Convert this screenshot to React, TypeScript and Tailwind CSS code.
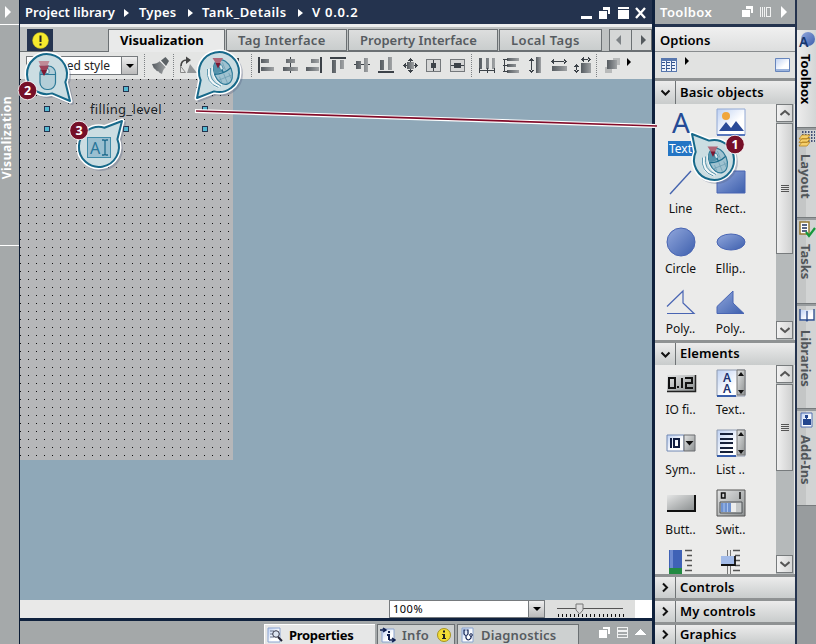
import React from "react";

type Kids = { children?: React.ReactNode };

const NAVY = "#24334e";

/* ---------- toolbar glyphs: 24x24 box each ---------- */
function Glyph({ children }: Kids) {
  return (
    <svg className="h-6 w-6 shrink-0" viewBox="0 0 24 24" shapeRendering="crispEdges">
      {children}
    </svg>
  );
}
const G = "url(#steel)";
const D = "#3c4248";

const alignGlyphs = [
  <Glyph key="l"><path fill={D} d="M4 3h2v16H4z" /><path fill={G} d="M7 5h8v4H7zM7 13h13v4H7z" /></Glyph>,
  <Glyph key="c"><path fill={D} d="M12 3h1v16h-1z" /><path fill={G} d="M8 5h9v4H8zM5 13h15v4H5z" /></Glyph>,
  <Glyph key="r"><path fill={D} d="M18 3h2v16h-2z" /><path fill={G} d="M9 5h8v4H9zM4 13h13v4H4z" /></Glyph>,
  <Glyph key="t"><path fill={D} d="M4 3h16v2H4z" /><path fill={G} d="M6 6h4v13H6zM14 6h4v9h-4z" /></Glyph>,
  <Glyph key="m"><path fill={D} d="M4 10h16v1H4z" /><path fill={G} d="M6 7h5v8H6zM14 4h4v14h-4z" /></Glyph>,
  <Glyph key="b"><path fill={D} d="M4 17h16v2H4z" /><path fill={G} d="M6 6h4v10H6zM14 3h4v13h-4z" /></Glyph>,
  <Glyph key="x"><path fill={G} d="M9 8h7v7H9z" /><path fill={D} d="M12 5h1v3h-1zM12 15h1v3h-1zM6 11h3v1H6zM16 11h3v1h-3z" /><path fill={D} d="M12.500 4l2.500 3h-5zM12.500 19l2.500-3h-5zM5 11.500l3-2.500v5zM20 11.500l-3-2.500v5z" /></Glyph>,
  <Glyph key="v"><path fill="#d5d6d6" stroke="#74787b" d="M4.500 5.500h14v12h-14z" /><path fill={D} d="M11 6h1v11h-1z" /><path fill={D} d="M9 9h5v5H9z" /></Glyph>,
  <Glyph key="h"><path fill="#d5d6d6" stroke="#74787b" d="M4.500 5.500h14v12h-14z" /><path fill={D} d="M5 11h13v1H5zM8 9h7v5H8z" /></Glyph>,
];
const spaceGlyphs = [
  <Glyph key="sh"><path fill={G} d="M4 4h3v11H4zM11 4h3v11h-3zM17 4h3v11h-3z" /><path fill={D} d="M4 14h1v5H4zM12 14h1v5h-1zM19 14h1v5h-1zM5 16h15v1H5z" /></Glyph>,
  <Glyph key="sv"><path fill={G} d="M8 4h12v3H8zM8 10h9v3H8zM8 16h12v3H8z" /><path fill={D} d="M4 5h5v1H4zM4 11h5v1H4zM4 17h5v1H4zM5 5h1v13H5z" /></Glyph>,
  <Glyph key="eh"><path fill={G} d="M13 3h5v16h-5z" /><path fill={D} d="M8 6h1v11H8zM8.500 4l3 3h-6zM8.500 19l3-3h-6z" /></Glyph>,
  <Glyph key="ew"><path fill={G} d="M5 12h15v5H5z" /><path fill={D} d="M7 7h11v1H7zM4 7.500l3-2.500v5zM20 7.500l-3-2.500v5z" /></Glyph>,
  <Glyph key="eb"><path fill={G} d="M10 9h10v10H10z" /><path fill={D} d="M12 5h6v1h-6zM10 5.500l3-2.500v5zM20 5.500l-3-2.500v5zM5 12h1v5H5zM5.500 10l2.500 3h-5zM5.500 19l2.500-3h-5z" /></Glyph>,
];

function Sep() {
  return <span className="h-[23px] w-px shrink-0 border-l border-dotted border-[#7d8184]" />;
}
function Tri({ className, color }: { className?: string; color?: string }) {
  return (
    <svg className={"shrink-0 " + (className ?? "")} viewBox="0 0 6 10" preserveAspectRatio="none">
      <path d="M0 0L6 5L0 10z" fill={color ?? "#fff"} />
    </svg>
  );
}

function Tab({ children, className }: Kids & { className: string }) {
  return (
    <div className={"flex h-[22px] shrink-0 items-center whitespace-nowrap border border-[#6b7073] text-[13px] leading-none " + className}>
      {children}
    </div>
  );
}

/* ---------- toolbox ---------- */
function SectionHead({ label, open, className }: { label: string; open?: boolean; className: string }) {
  return (
    <div className={"flex shrink-0 overflow-hidden border-t-[3px] border-[#8f9293] bg-linear-to-b from-[#ececec] to-[#c9cccc] " + className}>
      <div className="flex w-[21px] items-center justify-center border-r border-[#6f7375]">
        <svg className="h-[11px] w-[11px]" viewBox="0 0 11 11" fill="none" stroke="#111" strokeWidth="2">
          {open ? <path d="M1.500 3.500L5.500 7.500L9.500 3.500" /> : <path d="M3 1.500L7 5.500L3 9.500" />}
        </svg>
      </div>
      <div className="flex items-center pb-0.5 pl-1 text-[13px] font-semibold leading-[18px] tracking-[0.15px]">{label}</div>
    </div>
  );
}

function Item({ label, selected, children }: Kids & { label?: string; selected?: boolean }) {
  return (
    <div className="flex h-[60px] w-[50px] shrink-0 flex-col items-center">
      <div className="flex h-[34px] items-center justify-center">
        <svg className="h-8 w-8 overflow-visible" viewBox="0 0 32 32">{children}</svg>
      </div>
      {label && (
        <div className={"mr-px mt-0.5 flex h-[15px] items-center justify-center whitespace-nowrap px-px text-[12px] leading-[15px] " + (selected ? "bg-[#2475c4] text-white" : "text-[#111]")}>
          {label}
        </div>
      )}
    </div>
  );
}

function ScrollButton({ up }: { up?: boolean }) {
  return (
    <div className="flex h-[18px] w-[17px] shrink-0 items-center justify-center border border-[#777b7d] bg-linear-to-r from-[#f2f2f2] to-[#d6d7d7]">
      <svg className="h-2.5 w-2.5" viewBox="0 0 10 10" fill="none" stroke="#555" strokeWidth="2">
        {up ? <path d="M0.500 7L5 3L9.500 7" /> : <path d="M0.500 3L5 7L9.500 3" />}
      </svg>
    </div>
  );
}
function ScrollBar({ thumb }: { thumb: string }) {
  return (
    <div className="ml-auto mr-px flex w-[18px] shrink-0 flex-col bg-[#b5b9ba] pb-px">
      <ScrollButton up />
      <div className={"mt-px flex w-[17px] shrink-0 flex-col items-center justify-center gap-px border border-[#777b7d] bg-linear-to-r from-[#f0f0f0] to-[#cfd0d0] " + thumb}>
        <i className="h-px w-2 bg-[#555]" /><i className="h-px w-2 bg-[#555]" /><i className="h-px w-2 bg-[#555]" /><i className="h-px w-2 bg-[#555]" />
      </div>
      <div className="mt-auto"><ScrollButton /></div>
    </div>
  );
}

function SideTab({ label, className, active, children }: Kids & { label: string; className: string; active?: boolean }) {
  return (
    <div className={"flex w-[19px] shrink-0 flex-col items-center border-b border-[#777b7d] " + (active ? "bg-linear-to-r from-[#ededed] to-[#d4d6d6] text-black " : "bg-linear-to-r from-[#c4c6c6] from-50% to-[#d2d4d4] to-50% text-[#51565a] ") + className}>
      <svg className="h-[18px] w-[18px] shrink-0" viewBox="0 0 18 18">{children}</svg>
      <span className="mr-px mt-1.5 whitespace-nowrap text-[13px] font-bold leading-[18px] [writing-mode:vertical-rl]">{label}</span>
    </div>
  );
}

/* ---------- call-outs ---------- */
function Balloon({ cx, cy, tx, ty }: { cx: number; cy: number; tx: number; ty: number }) {
  const r = 20;
  const a = Math.atan2(ty - cy, tx - cx);
  const p = (t: number) => `${(cx + r * Math.cos(t)).toFixed(1)} ${(cy + r * Math.sin(t)).toFixed(1)}`;
  const d = `M${p(a + 0.45)}A${r} ${r} 0 1 1 ${p(a - 0.45)}L${tx} ${ty}Z`;
  return (
    <g strokeLinejoin="round">
      <path d={d} transform="translate(2 2)" fill="none" stroke="#55608055" strokeWidth="4" />
      <path d={d} fill="#cfdde2" stroke="#fff" strokeWidth="5" />
      <path d={d} fill="#cbdde2" stroke="#17698a" strokeWidth="2" />
    </g>
  );
}
function Badge({ x, y, n }: { x: number; y: number; n: number }) {
  return (
    <g>
      <circle cx={x} cy={y} r="9.300" fill="#760f28" stroke="#fff" strokeWidth="0.800" />
      <text x={x} y={y + 4.500} textAnchor="middle" fill="#fff" fontSize="12.500" fontWeight="700">{n}</text>
    </g>
  );
}
/* upright mouse with a press marker */
function MouseUpright({ x, y }: { x: number; y: number }) {
  return (
    <g transform={`translate(${x} ${y})`}>
      <rect x="-7.500" y="-8" width="15.500" height="23.500" rx="7" fill="#b3ced8" stroke="#2c7997" strokeWidth="1.200" />
      <path d="M-7 0V-2q0-5.500 7-5.500V0z" fill="#5f9ab1" />
      <path d="M-7.500 0.500h15.500M0-8v8" fill="none" stroke="#2c7997" strokeWidth="1.200" />
      <rect x="-1.500" y="-5" width="3" height="4.500" rx="1" fill="#dcebf0" stroke="#2c7997" strokeWidth="0.700" />
      <path d="M-9-13H2L0-8.500H-7z" fill="#c08a97" />
      <path d="M-8.500-8.500H1.500L-3.500 1.500z" fill="#9c4159" />
      <path d="M-6.500-4H-0.500L-3.500 2z" fill="#7d1731" />
    </g>
  );
}
/* tilted mouse with motion echoes for a drag */
function MouseDrag({ x, y }: { x: number; y: number }) {
  return (
    <g transform={`translate(${x} ${y})`}>
      <g fill="none" stroke="#5c97ae" strokeWidth="1">
        <path d="M-12.500-3q-2 14 11 18" stroke="#f4f8f9" strokeWidth="3" />
        <path d="M-13.500-3q-2 14 11 18.500" />
        <path d="M-10.500-4q-2 13 10.500 18" />
        <path d="M-8-5q-1 12 9 18" stroke="#f4f8f9" strokeWidth="1.500" />
      </g>
      <g transform="translate(2 0) rotate(-22)">
        <ellipse rx="8.800" ry="12.800" fill="#9fc2d0" stroke="#2c7997" strokeWidth="1.200" />
        <path d="M-8.800-1Q-7-12.500 0-12.500V-0.500z" fill="#5593ac" />
        <path d="M-8.800-1Q0 2.500 8.800-1M0-12.800V0.500" fill="none" stroke="#1d6d8d" strokeWidth="1.200" />
        <path d="M-5 3v6M0 2v10M5 3v6M-7 6h14M3-9v8" stroke="#6d9fb3" strokeWidth="0.700" />
        <rect x="-1.400" y="-7.500" width="2.800" height="5" rx="1" fill="#dcebf0" stroke="#1d6d8d" strokeWidth="0.600" />
      </g>
      <path d="M-8.500-14H2L-3-5.500z" fill="#b06577" />
      <path d="M-5.500-9H-0.500L-3-3.500z" fill="#7d1731" />
    </g>
  );
}

const handles = [[126, 89], [47, 109], [205, 109], [47, 129], [126, 129], [205, 129]];

export default function App() {
  return (
    <div className="relative flex h-[644px] w-[816px] overflow-hidden bg-[#a4a8a9] font-['Noto_Sans',sans-serif] text-black">
      <svg className="absolute h-0 w-0">
        <defs>
          <linearGradient id="steel" x1="0" x2="1"><stop stopColor="#555b60" /><stop offset="1" stopColor="#a0a3a5" /></linearGradient>
          <linearGradient id="blue" x1="0" y1="0" x2="1" y2="1"><stop stopColor="#91a7dc" /><stop offset="1" stopColor="#3d5fad" /></linearGradient>
          <linearGradient id="pale" x1="0" y1="0" x2="1" y2="1"><stop stopColor="#bdd0f2" /><stop offset="0.600" stopColor="#fff" /></linearGradient>
          <linearGradient id="grey" x1="0" y1="0" x2="1" y2="1"><stop stopColor="#e4e5e5" /><stop offset="1" stopColor="#8d9192" /></linearGradient>
        </defs>
      </svg>

      {/* left rail */}
      <div className="flex w-5 shrink-0 flex-col border-r border-[#0c1c35] bg-[#a5a9aa]">
        <div className="flex h-[25px] items-center border-b border-white pl-[5px]"><Tri className="h-3 w-1.5" /></div>
        <div className="flex h-[221px] items-center border-b border-white">
          <span className="mt-[5px] rotate-180 whitespace-nowrap text-[12px] font-bold leading-[14px] tracking-[0.5px] text-white [writing-mode:vertical-rl]">Visualization</span>
        </div>
      </div>

      {/* editor */}
      <div className="flex w-[632px] shrink-0 flex-col">
        <div className="flex h-6 shrink-0 items-center whitespace-nowrap bg-[#24334e] pl-[5px] pt-px text-[13px] font-semibold text-white">
          <span className="w-[99px] tracking-[0.05px]">Project library</span><Tri className="h-2 w-[5px]" />
          <span className="ml-[10px] w-[49px] tracking-[0.2px]">Types</span><Tri className="h-2 w-[5px]" />
          <span className="ml-[9px] w-[96px] tracking-[0.45px]">Tank_Details</span><Tri className="h-2 w-[5px]" />
          <span className="ml-[9px] tracking-[0.75px]">V 0.0.2</span>
          <svg className="ml-auto mr-[5px] h-3.5 w-[66px]" viewBox="0 0 66 14" fill="#fff" shapeRendering="crispEdges">
            <path d="M0 10h11v3H0zM22 1h7v7h-2V4h-5zM18 5h8v8h-8zM37 1h11v2H37zM37 4h11v9H37z" />
            <path d="M55 2L64 12M64 2L55 12" stroke="#fff" strokeWidth="2.300" shapeRendering="auto" />
          </svg>
        </div>
        <div className="flex h-7 shrink-0 items-end border-b border-t-[3px] border-b-[#6b7073] border-t-[#eceded] bg-[#bfc2c2] text-[#565b60]">
          <div className="ml-[7px] mr-[55px] flex h-[22px] w-[26px] shrink-0 items-center justify-center bg-[#24334e]">
            <svg className="h-[17px] w-[17px]" viewBox="0 0 17 17"><circle cx="8.500" cy="8.500" r="8" fill="#f5ea2d" stroke="#b5aa1f" strokeWidth="0.500" /><path d="M7.500 3.500h2v6.500h-2zM7.500 11.500h2v2h-2z" fill="#222" /></svg>
          </div>
          <Tab className="-mb-px h-[23px] w-[117px] border-b-0 bg-[#e9eaea] pb-0.5 pl-[11px] font-bold tracking-[0.05px] text-black">Visualization</Tab>
          <Tab className="ml-px w-[121px] bg-linear-to-b from-[#dddede] to-[#c9cdcd] pl-[11px] font-semibold tracking-[0.3px]">Tag Interface</Tab>
          <Tab className="ml-px w-[150px] bg-linear-to-b from-[#dddede] to-[#c9cdcd] pl-[11px] font-semibold">Property Interface</Tab>
          <Tab className="ml-px w-[103px] bg-linear-to-b from-[#dddede] to-[#c9cdcd] pl-[11px] font-semibold tracking-[0.4px]">Local Tags</Tab>
          <Tab className="ml-auto w-[23px] justify-center bg-[#d5d7d7]"><Tri className="mr-1 h-2.5 w-[5px] rotate-180" color="#7c8185" /></Tab>
          <Tab className="-ml-px w-[21px] justify-center bg-[#d5d7d7]"><Tri className="ml-[3px] h-2.5 w-[5px]" color="#555a5e" /></Tab>
        </div>

        {/* tool bar */}
        <div className="flex h-[27px] shrink-0 items-center bg-[#e4e5e4]">
          <div className="ml-1.5 flex h-[19px] w-[112px] items-center justify-end border border-[#767a7d] bg-white">
            <span className="mr-[11px] whitespace-nowrap text-[12px] leading-none text-[#222]">Advanced style</span>
            <div className="flex h-[17px] w-4 shrink-0 items-center justify-center border-l border-[#767a7d] bg-linear-to-b from-[#eee] to-[#bbb]">
              <svg className="h-1 w-2" viewBox="0 0 8 4"><path d="M0 0h8L4 4z" /></svg>
            </div>
          </div>
          <div className="w-[6px]" /><Sep /><div className="w-1" />
          <svg className="h-6 w-6 shrink-0" viewBox="0 0 24 24"><path d="M3 10q5 0 8-3l6 6q-3 2-4 7q-3-1-4-3q-1 1-2-1q-3-2-4-6z" fill={G} /><path d="M11 6.500l7 7" stroke="#f0f0f0" strokeWidth="1.300" /><path d="M12 6.500l4.500-3.500l3.500 4l-3 5z" fill="#5c6266" /></svg>
          <Sep /><div className="w-0.5" />
          <svg className="h-6 w-6 shrink-0" viewBox="0 0 24 24"><path d="M4.500 18.500V12L9.500 18.500z" fill="none" stroke="#888" /><path d="M14 10L21 19H11z" fill="#939698" /><path d="M5 12q0-6 6-6" fill="none" stroke="#444" strokeWidth="1.700" /><path d="M10 2.500l5 3.500l-5 4z" fill="#444" /></svg>
          <div className="w-5" />
          <Glyph><path fill={D} d="M17 4h2v4h-2zM15 9h3v3h-3zM18 14h3v3h-3z" /></Glyph>
          <div className="w-[7px]" /><Sep /><div className="w-0.5" />
          {alignGlyphs}
          <div className="w-px" /><Sep /><div className="w-[3px]" />
          {spaceGlyphs}
          <div className="w-px" /><Sep /><div className="w-1" />
          <Glyph><path fill="#b8baba" d="M12 4h7v7h-7zM4 13h7v6H4z" /><path fill={G} d="M6 6h10v9H6z" /></Glyph>
          <Tri className="mb-2 ml-0.5 h-2 w-1" color="#000" />
        </div>

        {/* drawing area */}
        <div className="h-[521px] shrink-0 bg-[#8fa8b8]">
          <div className="relative h-[381px] w-[213px] bg-[#b6b7b9]">
            <svg className="h-full w-full" shapeRendering="crispEdges">
              <defs><pattern id="dots" width="8" height="8" patternUnits="userSpaceOnUse"><rect width="1" height="1" fill="#111" /></pattern></defs>
              <rect width="213" height="381" fill="url(#dots)" />
            </svg>
            <span className="absolute left-[70px] top-[22px] whitespace-nowrap text-[13px] leading-4 tracking-[0.35px] text-[#20262c]">filling_level</span>
          </div>
        </div>

        {/* zoom bar */}
        <div className="flex h-[18px] shrink-0 bg-[#e9e9e8]">
          <div className="ml-[369px] flex w-[156px] justify-between border border-[#767a7d] bg-white">
            <span className="pl-[3px] text-[11px] leading-4 tracking-[0.5px]">100%</span>
            <div className="flex w-4 items-center justify-center border-l border-[#767a7d] bg-linear-to-b from-[#eee] to-[#bbb]">
              <svg className="h-1 w-2" viewBox="0 0 8 4"><path d="M0 0h8L4 4z" /></svg>
            </div>
          </div>
          <svg className="h-[18px] w-[90px] bg-[#dedfde]" viewBox="0 0 90 18" shapeRendering="crispEdges">
            <path d="M12 8h66v1H12z" fill="#555" />
            <path d="M12.500 15.500H79" stroke="#111" strokeWidth="3" strokeDasharray="1 3.100" />
            <path d="M31 4h7v6l-3.500 4l-3.500-4z" fill="#ddd" stroke="#777" shapeRendering="auto" />
          </svg>
          <div className="ml-auto w-[17px] bg-white" />
        </div>
        <div className="h-[3px] shrink-0 bg-[#0f213d]" />

        {/* inspector tabs */}
        <div className="flex h-5 grow items-end bg-[#a4a8a9] text-[#565b60]">
          <div className="ml-[244px] flex h-5 w-[111px] items-center border-l border-t border-white bg-[#e6e7e7] text-[13px] font-bold text-black">
            <svg className="ml-[2px] h-4 w-4" viewBox="0 0 16 16"><path d="M1 1h12v14H1z" fill="url(#pale)" stroke="#8aa3d0" /><path d="M3 4h4M3 7h3M3 10h4" stroke="#68738a" /><circle cx="9" cy="7" r="3.300" fill="#dce4f0" stroke="#334" /><path d="M11 10l4 4" stroke="#223" strokeWidth="2" /></svg>
            <span className="ml-1.5 mt-0.5 leading-none tracking-[-0.3px]">Properties</span>
          </div>
          <div className="ml-0.5 flex h-5 w-[78px] items-center border border-b-0 border-[#6b7073] bg-[#cdd0d0] text-[13px] font-semibold">
            <svg className="ml-[2px] h-4 w-4" viewBox="0 0 16 16"><path d="M2 2h12v13H2z" fill="url(#pale)" stroke="#8aa3d0" /><path d="M0 3h6M3 1l3 2l-3 2M9 13h6M12 11l3 2l-3 2" fill="none" stroke="#102050" strokeWidth="1.500" /><path d="M8 4h2v2H8zM7 7h3v6H8V9H7z" fill="#102050" /></svg>
            <span className="ml-1.5 mt-0.5 leading-none tracking-[0.3px]">Info</span>
            <svg className="ml-2 h-3.5 w-3.5" viewBox="0 0 14 14"><circle cx="7" cy="7" r="6.500" fill="#f2dc35" stroke="#a6921f" /><path d="M6 2.500h2v2H6zM5 6h3v4h1v1H5v-1h1V7H5z" fill="#222" /></svg>
          </div>
          <div className="ml-0.5 flex h-5 w-[122px] items-center border border-b-0 border-[#6b7073] bg-[#cdd0d0] text-[13px] font-semibold">
            <svg className="ml-[2px] h-4 w-4" viewBox="0 0 16 16"><path d="M2 1h11v14H2z" fill="url(#pale)" stroke="#8aa3d0" /><path d="M5.500 3H4v4q2 3 4 0V3H6.500M6 8.500v2.500q2 4 5 0V9" fill="none" stroke="#102050" strokeWidth="1.200" /><circle cx="11" cy="8" r="1.300" fill="none" stroke="#102050" /></svg>
            <span className="ml-[5px] mt-0.5 leading-none tracking-[0.15px]">Diagnostics</span>
          </div>
          <svg className="mb-1 ml-auto mr-[5px] h-3.5 w-[49px]" viewBox="0 0 49 14" fill="#fff" shapeRendering="crispEdges">
            <path d="M5 1h7v7h-2V3H5zM1 4h8v8H1z" /><path d="M19 1h11v1H19zM19 4h11v1H19zM19 5h11v1H19zM19 8h11v1H19zM19 11h11v1H19zM19 1h1v11h-1zM29 1h1v11h-1z" opacity="0.850" /><path d="M36 9l6-6l6 6z" />
          </svg>
        </div>
      </div>

      {/* toolbox */}
      <div className="w-[3px] shrink-0 bg-[#0f213d]" />
      <div className="flex w-[140px] shrink-0 flex-col bg-[#ebebea]">
        <div className="flex h-6 shrink-0 items-center bg-[#a4a8a9] pl-[5px] text-[13px] font-semibold text-white">
          <span className="mt-0.5 tracking-[0.4px]">Toolbox</span>
          <svg className="ml-auto mr-[5px] h-3.5 w-[50px]" viewBox="0 0 50 14" fill="#fff" shapeRendering="crispEdges">
            <path d="M6 1h7v7h-2V4H6zM2 5h8v7H2z" /><path d="M20 2h1v10h-1zM22 2h1v10h-1zM24 2h1v10h-1zM26 2h5v1h-5zM26 11h5v1h-5zM26 2h1v10h-1zM30 2h1v10h-1z" opacity="0.850" /><path d="M41 1l6 6l-6 6z" shapeRendering="auto" />
          </svg>
        </div>
        <div className="h-[3px] shrink-0 bg-[#24334e]" />
        <div className="flex h-[25px] shrink-0 items-center border-b border-[#888c8e] bg-linear-to-b from-[#f0f0f0] to-[#dddede] pl-[5px] pt-[3px] text-[13px] font-semibold tracking-[0.05px]">Options</div>
        <div className="flex h-[26px] shrink-0 items-center bg-[#e1e2e1] pl-1.5">
          <svg className="h-4 w-4" viewBox="0 0 16 16" shapeRendering="crispEdges"><path d="M0 1h16v14H0z" fill="#5877ae" /><path d="M1 4h14v10H1z" fill="#eef3fb" /><path d="M5 4v10M10 4v10" stroke="#446297" /><path d="M1 5.500h14M1 8.500h14M1 11.500h14" stroke="#34548e" strokeDasharray="3 2" /></svg>
          <Tri className="mb-2 ml-2 h-2 w-1" color="#000" />
          <svg className="ml-auto mr-[5px] h-[15px] w-[15px]" viewBox="0 0 15 15"><path d="M0.500 0.500h14v13h-14z" fill="url(#pale)" stroke="#6685bc" /><path d="M1 11h13v2H1z" fill="#9cb4dd" /></svg>
        </div>
        <SectionHead label="Basic objects" open className="h-[26px]" />
        <div className="flex h-[236px] shrink-0 overflow-hidden">
          <div className="flex w-[120px] flex-wrap content-start pl-px pt-px">
            <Item label="Text" selected>
              <text x="16" y="27" textAnchor="middle" fontFamily="Noto Sans" fontSize="28" fill="#254b96">A</text>
            </Item>
            <Item><path d="M2 3h28v26H2z" fill="url(#pale)" stroke="#91a8d4" /><path d="M2 28h28v2H2z" fill="#5877bd" /><circle cx="11" cy="10" r="4" fill="#f0a63d" /><path d="M4 25l7-9l5 6l5-7l8 10z" fill="#2b4b98" /></Item>
            <Item label="Line"><path d="M5 28L26 5" stroke="#4564ae" strokeWidth="1.400" /></Item>
            <Item label="Rect.."><path d="M2 5h28v22H2z" fill="url(#blue)" stroke="#4965b3" /></Item>
            <Item label="Circle"><circle cx="16" cy="16" r="14" fill="url(#blue)" stroke="#4965b3" /></Item>
            <Item label="Ellip.."><ellipse cx="16" cy="16" rx="14" ry="8" fill="url(#blue)" stroke="#4965b3" /></Item>
            <Item label="Poly.."><path d="M2 20.500L18 5v12l11 10.500H2" fill="none" stroke="#4965b3" strokeWidth="1.200" /></Item>
            <Item label="Poly.."><path d="M2 27.500V20.500L18 5v12l11 10.500z" fill="url(#blue)" stroke="#4965b3" /></Item>
          </div>
          <ScrollBar thumb="h-[131px]" />
        </div>
        <SectionHead label="Elements" open className="h-[25px]" />
        <div className="flex h-[209px] shrink-0 overflow-hidden">
          <div className="flex h-[240px] w-[120px] shrink-0 flex-wrap content-start pl-px pt-px">
            <Item label="IO fi..">
              <path d="M2 8h28v16H2z" fill="url(#grey)" /><path d="M2 24.500h28.500V8" fill="none" stroke="#222" strokeWidth="1.500" />
              <g fill="none" stroke="#111" strokeWidth="2"><path d="M4 11h6v10H4zM17 11v10M20 11h7v5h-6v5h7" /><path d="M12 20h2" /></g>
            </Item>
            <Item label="Text..">
              <path d="M2 3h28v26H2z" fill="url(#pale)" stroke="#8e9ab0" /><path d="M22 3h8v25h-8z" fill="url(#grey)" stroke="#777" />
              <path d="M23 9l3-4l3 4zM23 23l3 4l3-4z" fill="#111" /><path d="M2 28h19v2H2z" fill="#395eaa" />
              <g fontSize="12" fontWeight="600" fill="#1d3270" textAnchor="middle"><text x="12" y="14.500">A</text><text x="12" y="26">A</text></g>
            </Item>
            <Item label="Sym..">
              <path d="M2 8h17v16H2z" fill="url(#pale)" stroke="#7188b3" /><path d="M19 8h11v16H19z" fill="url(#grey)" stroke="#6a6d70" /><path d="M6 11v10M9 12h5v8h-5z" fill="none" stroke="#111d40" strokeWidth="2" /><path d="M20.500 14h8l-4 4.500z" fill="#111" />
            </Item>
            <Item label="List ..">
              <path d="M2 3h28v26H2z" fill="url(#pale)" stroke="#8e9ab0" /><path d="M22 3h8v25h-8z" fill="url(#grey)" stroke="#777" /><path d="M23 9l3-4l3 4zM23 23l3 4l3-4z" fill="#111" /><path d="M5 7h13M5 12h13M5 16h13M5 21h13M5 25h13" stroke="#152039" strokeWidth="2" /><path d="M2 28h19v2H2z" fill="#395eaa" />
            </Item>
            <Item label="Butt.."><path d="M2 8h27v15H2z" fill="url(#grey)" /><path d="M2 24h28V8" fill="none" stroke="#111" strokeWidth="2" /></Item>
            <Item label="Swit..">
              <path d="M2 3h28v26H2z" fill="url(#grey)" stroke="#555" /><path d="M6.500 6h3.500v5H6.500zM25 5v7" fill="none" stroke="#111" strokeWidth="1.500" />
              <path d="M5 15h22v11H5z" fill="#c6c9ca" stroke="#4d5054" /><path d="M6 16h10v9H6z" fill="#6f92d0" /><path d="M9 16v9M12.500 16v9" stroke="#a9c3ec" /><path d="M16 16h5v9h-5z" fill="#eceded" />
            </Item>
            <Item><path d="M4 3h13v20H4z" fill="#3f62b6" /><path d="M5 3h3v18H5z" fill="#6d8ad0" /><path d="M4 21h13v9H4z" fill="#228a42" /><path d="M20 3.500h7M22 8.500h5M20 13.500h7M22 18.500h5M20 23.500h7" stroke="#555" strokeWidth="1.400" /></Item>
            <Item><path d="M12.500 3v24M15.500 3v24" stroke="#777" /><path d="M18 3.500h7M20 8.500h5M18 13.500h7M20 18.500h5M18 23.500h7" stroke="#555" strokeWidth="1.400" /><path d="M6 9h13v8H6z" fill="#a3bbe8" /><path d="M6 18h14V9" fill="none" stroke="#111" strokeWidth="1.800" /></Item>
          </div>
          <ScrollBar thumb="h-[87px]" />
        </div>
        <SectionHead label="Controls" className="h-6" />
        <SectionHead label="My controls" className="h-6" />
        <SectionHead label="Graphics" className="h-[22px]" />
      </div>

      {/* task cards */}
      <div className="w-0.5 shrink-0 bg-[#24334e]" />
      <div className="flex w-[19px] shrink-0 flex-col gap-0.5 bg-[#989c9e] pt-[30px]">
        <SideTab label="Toolbox" className="h-[98px]" active><circle cx="10" cy="9" r="7" fill="url(#blue)" /><text x="1" y="16.500" fontSize="14" fontWeight="600" fill="#17366c">A</text></SideTab>
        <SideTab label="Layout" className="h-[88px]"><path d="M4 2h13M4 5h13M4 8h13M4 11h13" stroke="#17275a" strokeWidth="1.500" strokeDasharray="1.500 1.500" /><path d="M1 16l3-4h8l-3 4zM1 12.500l3-4h8l-3 4zM1 9l3-4h8l-3 4z" fill="#f5cf6b" stroke="#b98622" strokeWidth="0.800" /></SideTab>
        <SideTab label="Tasks" className="h-[84px]"><path d="M2 2h9v12H2z" fill="#fff" stroke="#977b36" strokeWidth="1.500" /><path d="M4 5h5M4 8h5M4 11h5" stroke="#22335d" strokeWidth="1.500" /><path d="M8 12l3 4l6-8" fill="none" stroke="#16983c" strokeWidth="2.200" /></SideTab>
        <SideTab label="Libraries" className="h-[103px]"><path d="M2 4h6l1 1l1-1h6v11h-6l-1 1l-1-1H2z" fill="url(#pale)" /><path d="M2 3v11h6l1 1l1-1h6V3M9 5v10" fill="none" stroke="#28498b" strokeWidth="1.300" /></SideTab>
        <SideTab label="Add-Ins" className="h-[95px]"><path d="M3 2h11v14H3z" fill="url(#pale)" stroke="#536fb0" /><path d="M7 4h3v3H7zM5 8h8v6H5z" fill="#24468f" /><path d="M8 7h1v2H8z" fill="#24468f" /></SideTab>
      </div>

      {/* selection handles, call-outs and connector */}
      <svg className="pointer-events-none absolute inset-0 h-[644px] w-[816px]" viewBox="0 0 816 644">
        {handles.map(([x, y]) => <rect key={x + "-" + y} x={x - 2.500} y={y - 2.500} width="5" height="5" fill="#54b9d2" stroke={NAVY} />)}
        <path d="M195 111L655 126" stroke="#fff" strokeWidth="4" />
        <path d="M196 111L657 126" stroke="#820b29" strokeWidth="1.700" />
        <Balloon cx={47} cy={74} tx={70} ty={101} />
        <MouseUpright x={47.500} y={74} />
        <Badge x={27.500} y={90.500} n={2} />
        <Balloon cx={219} cy={72} tx={197} ty={98} />
        <MouseDrag x={221} y={72} />
        <Balloon cx={99} cy={147} tx={122} ty={121} />
        <rect x="87.500" y="137.500" width="23" height="20" fill="#9bbfd0" stroke="#3f8ba8" />
        <text x="90" y="153.500" fontSize="16" fill="#28759a">A</text>
        <path d="M102 140h2l1 1l1-1h2M105 141v13M102 155h2l1-1l1 1h2" fill="none" stroke="#206b8d" strokeWidth="1.300" />
        <Badge x={79} y={130.500} n={3} />
        <Balloon cx={714} cy={160} tx={692} ty={134} />
        <MouseDrag x={716} y={160.500} />
        <Badge x={735} y={144.500} n={1} />
      </svg>
    </div>
  );
}
